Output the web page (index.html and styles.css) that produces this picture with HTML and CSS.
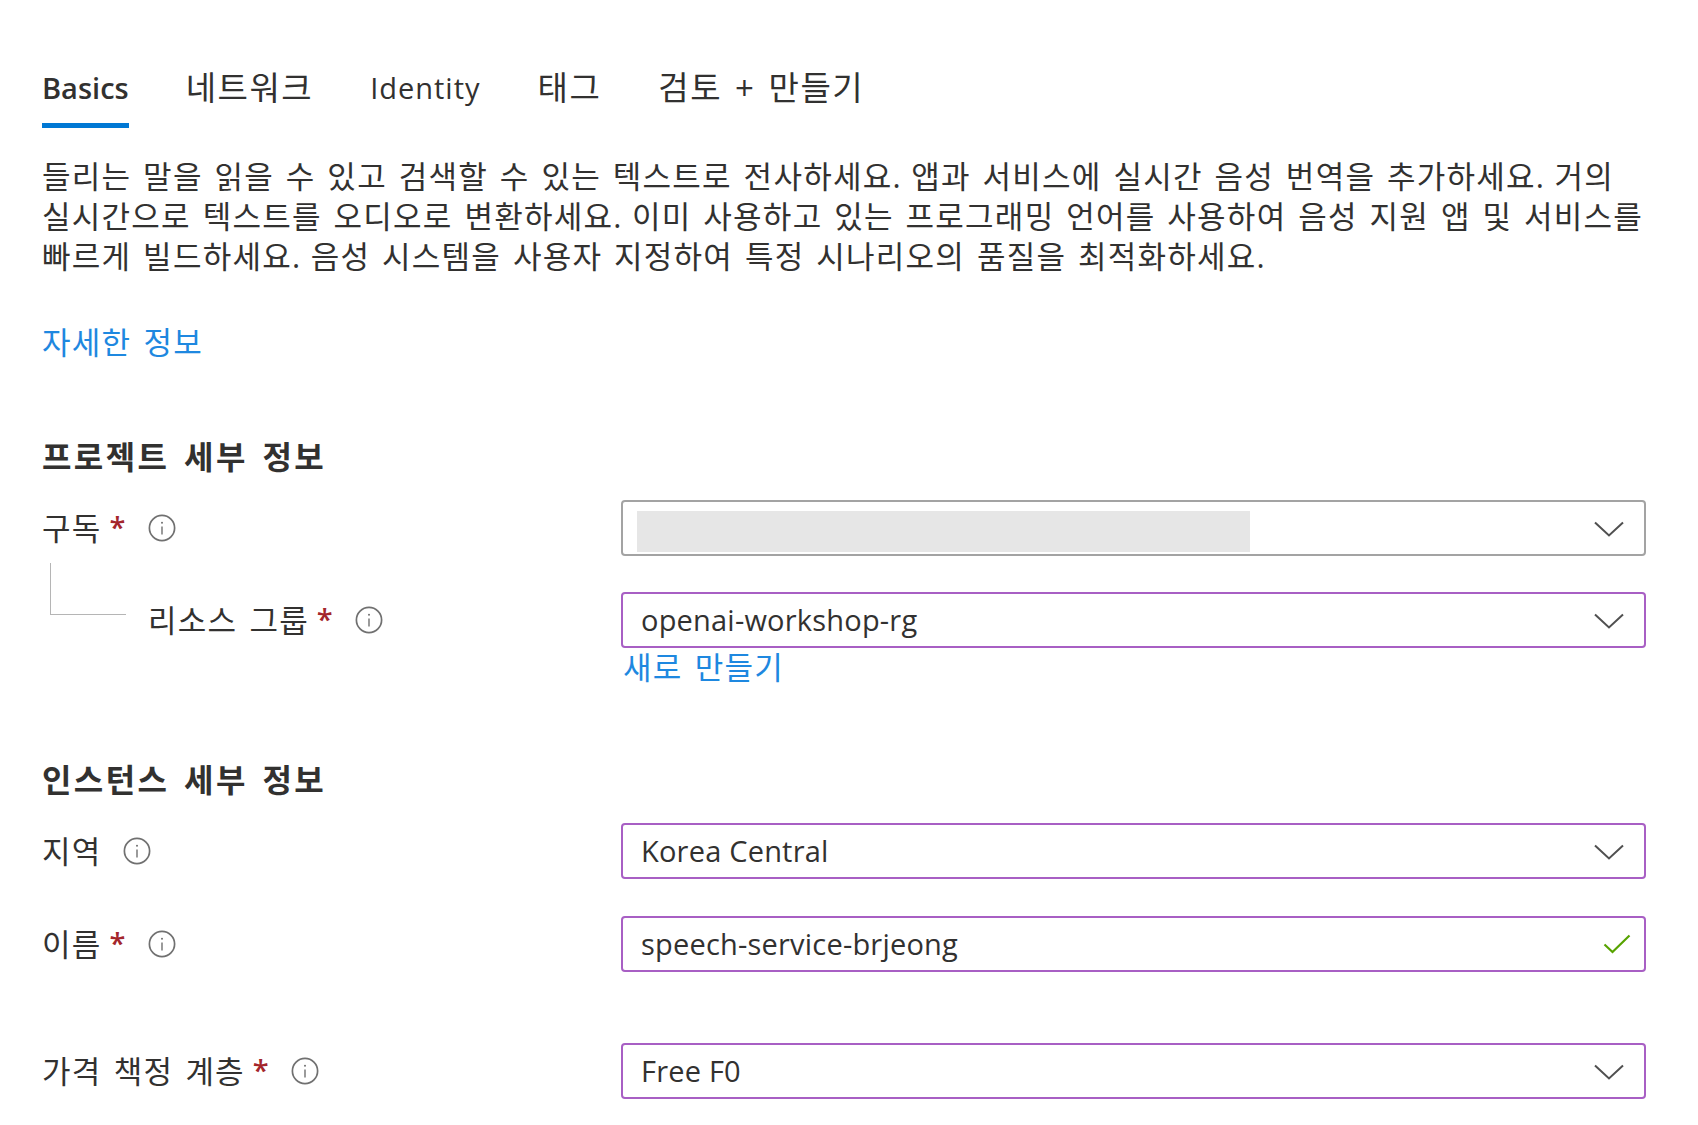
FILE: index.html
```html
<!DOCTYPE html>
<html lang="ko">
<head>
    <meta charset="UTF-8">
    <meta name="viewport" content="width=device-width, initial-scale=1.0">
    <title>Speech service - Basics</title>
    <link rel="stylesheet" href="styles.css">
</head>
<body>
    <svg class="icon-defs" width="0" height="0" aria-hidden="true">
        <symbol id="info" viewBox="0 0 28 28">
            <circle cx="14" cy="14" r="12.6" fill="none" stroke="#707070" stroke-width="1.7"/>
            <path d="M14 12.5V20.5" stroke="#707070" stroke-width="1.4"/>
            <circle cx="14" cy="8.8" r="1" fill="#707070"/>
        </symbol>
        <symbol id="chevron" viewBox="0 0 30 16">
            <path d="M1 1.5L15 14.5L29 1.5" fill="none" stroke="#505050" stroke-width="2"/>
        </symbol>
    </svg>

    <nav class="tabs">
        <a class="tab active">Basics</a>
        <a class="tab ko">네트워크</a>
        <a class="tab latin">Identity</a>
        <a class="tab ko">태그</a>
        <a class="tab ko">검토 + 만들기</a>
    </nav>

    <p class="intro">들리는 말을 읽을 수 있고 검색할 수 있는 텍스트로 전사하세요<span class="stop">. </span>앱과 서비스에 실시간 음성 번역을 추가하세요<span class="stop">. </span>거의<br>실시간으로 텍스트를 오디오로 변환하세요<span class="stop">. </span>이미 사용하고 있는 프로그래밍 언어를 사용하여 음성 지원 앱 및 서비스를<br>빠르게 빌드하세요<span class="stop">. </span>음성 시스템을 사용자 지정하여 특정 시나리오의 품질을 최적화하세요.</p>
    <a class="link more">자세한 정보</a>

    <h2 class="section first">프로젝트 세부 정보</h2>
    <div class="row">
        <div class="label">구독<span class="req">*</span><svg class="info"><use href="#info"/></svg></div>
        <div class="field plain">
            <span class="redacted"></span>
            <svg class="chevron"><use href="#chevron"/></svg>
        </div>
    </div>
    <div class="row gap-36">
        <div class="label">
            <span class="tree"></span>
            리소스 그룹<span class="req">*</span><svg class="info"><use href="#info"/></svg>
        </div>
        <div class="field">
            <span class="value">openai-workshop-rg</span>
            <svg class="chevron"><use href="#chevron"/></svg>
        </div>
    </div>
    <a class="link create">새로 만들기</a>

    <h2 class="section second">인스턴스 세부 정보</h2>
    <div class="row">
        <div class="label">지역<svg class="info region-info"><use href="#info"/></svg></div>
        <div class="field">
            <span class="value">Korea Central</span>
            <svg class="chevron"><use href="#chevron"/></svg>
        </div>
    </div>
    <div class="row gap-37">
        <div class="label">이름<span class="req">*</span><svg class="info"><use href="#info"/></svg></div>
        <div class="field">
            <span class="value">speech-service-brjeong</span>
            <svg class="check" viewBox="0 0 28 20"><path d="M1.5 10.5L9.5 18L26.5 1.5" fill="none" stroke="#57a300" stroke-width="2.2"/></svg>
        </div>
    </div>
    <div class="row gap-71">
        <div class="label">가격 책정 계층<span class="req">*</span><svg class="info"><use href="#info"/></svg></div>
        <div class="field">
            <span class="value">Free F0</span>
            <svg class="chevron"><use href="#chevron"/></svg>
        </div>
    </div>
</body>
</html>
```

FILE: styles.css
```css
* {
    box-sizing: border-box;
}
html, body {
    height: 1125px;
    overflow: hidden;
}
body {
    margin: 0;
    padding: 0 52px 0 42px;
    background: white;
    color: #323130;
    font-family: "Open Sans", "Noto Sans CJK KR", sans-serif;
    font-size: 29px;
}
.icon-defs {
    display: block;
    height: 0;
}
.tabs {
    display: flex;
    gap: 57px;
    height: 128px;
    padding-top: 62px;
}
.tab {
    height: 66px;
    line-height: 52px;
    white-space: nowrap;
}
.tab.ko {
    font-size: 33px;
    letter-spacing: 1.5px;
    word-spacing: 3px;
}
.tab.latin {
    letter-spacing: 1px;
}
.tab.active {
    font-weight: 600;
    border-bottom: 5px solid #0078d4;
}
.intro {
    margin: 28px 0 0;
    font-size: 31px;
    line-height: 40px;
    letter-spacing: 1.25px;
    word-spacing: 2.5px;
    white-space: nowrap;
}
.stop {
    word-spacing: 0;
}
.link {
    display: block;
    color: #1e88e0;
    font-size: 31px;
    line-height: 40px;
    letter-spacing: 1.2px;
    word-spacing: 3px;
}
.more {
    margin-top: 46px;
}
.create {
    margin-left: 581px;
    margin-top: -1px;
}
.section {
    margin: 0;
    font-size: 32px;
    font-weight: 700;
    line-height: 40px;
    letter-spacing: 2.4px;
    word-spacing: 4px;
}
.section.first {
    margin-top: 75px;
}
.section.second {
    margin-top: 73px;
}
.row {
    display: flex;
    margin-top: 23px;
}
.row.gap-36 {
    margin-top: 36px;
}
.row.gap-37 {
    margin-top: 37px;
}
.row.gap-71 {
    margin-top: 71px;
}
.label {
    flex: 0 0 579px;
    display: flex;
    align-items: center;
    padding-bottom: 3px;
    font-size: 31px;
    letter-spacing: 1.2px;
    word-spacing: 3px;
    white-space: nowrap;
}
.req {
    color: #a4262c;
    margin-left: 8px;
    font-size: 29px;
    font-weight: 600;
}
.info {
    width: 28px;
    height: 28px;
    margin-left: 21px;
    margin-top: 3px;
}
.region-info {
    margin-left: 22px;
}
.tree {
    flex: none;
    align-self: flex-start;
    width: 76px;
    height: 52px;
    margin: -29px 22px 0 8px;
    border-left: 1.5px solid #b5b5b5;
    border-bottom: 1.5px solid #b5b5b5;
}
.field {
    flex: 1;
    height: 56px;
    display: flex;
    align-items: center;
    justify-content: space-between;
    padding: 0 20px 0 18px;
    border: 2px solid #a85fc4;
    border-radius: 4px;
}
.field.plain {
    border-color: #a3a3a3;
    padding-left: 14px;
}
.redacted {
    width: 613px;
    height: 41px;
    margin-top: 7px;
    background: #e6e6e6;
}
.value {
    padding-bottom: 2px;
    letter-spacing: 0.2px;
    white-space: nowrap;
}
.chevron {
    width: 30px;
    height: 16px;
    margin-top: 1px;
}
.check {
    width: 28px;
    height: 20px;
    margin-right: -7px;
}
```
